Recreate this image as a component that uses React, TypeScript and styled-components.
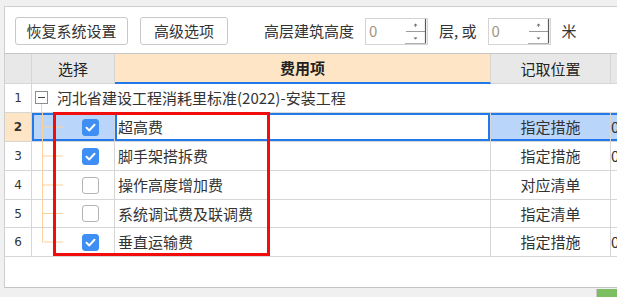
import React from 'react';
import styled, { createGlobalStyle, css } from 'styled-components';

const GlobalStyle = createGlobalStyle`
    html, body {
        margin: 0;
        padding: 0;
        background: #f0f0f0;
        overflow: hidden;
    }
    body {
        font-family: "Noto Sans CJK SC", "Noto Sans", sans-serif;
        color: #333333;
    }
`;

const Page = styled.div`
    width: 617px;
    height: 297px;
    padding: 6px 0 0 4px;
    box-sizing: border-box;
    display: flex;
    flex-direction: column;
`;

const Panel = styled.div`
    position: relative;
    height: 282px;
    width: 620px;
    box-sizing: border-box;
    background: #ffffff;
    border-top: 1px solid #cfcfcf;
    border-left: 1px solid #cfcfcf;
    border-bottom: 1px solid #c4c4c4;
    display: flex;
    flex-direction: column;
    overflow: hidden;
`;

const Toolbar = styled.div`
    height: 47px;
    box-sizing: border-box;
    border-bottom: 1px solid #c6c6c6;
    display: flex;
    align-items: center;
    padding: 2px 0 0 10px;
    gap: 12px;
    font-size: 15px;
`;

const ToolButton = styled.button<{ $w: number }>`
    width: ${(p) => p.$w}px;
    height: 28px;
    padding: 0;
    background: #ffffff;
    border: 1px solid #c8c8c8;
    border-radius: 3px;
    font-family: inherit;
    font-size: 15px;
    color: #333333;
    line-height: 26px;
`;

const HeightGroup = styled.div`
    display: flex;
    align-items: center;
    gap: 11px;
    margin-left: 24px;
`;

const Label = styled.span`
    line-height: 20px;
    white-space: nowrap;
`;

const SpinBox = styled.div`
    width: 63px;
    height: 27px;
    box-sizing: border-box;
    border: 1px solid #d4d4d4;
    display: flex;
    align-items: center;
    justify-content: space-between;
    padding: 0 0 0 3px;
`;

const SpinValue = styled.span`
    font-size: 15px;
    color: #a4947f;
    line-height: 20px;
`;

const SpinArrows = () => (
    <svg width="22" height="25" viewBox="0 0 22 25">
        <line x1="1" y1="12.5" x2="20" y2="12.5" stroke="#9a9a9a" strokeWidth="1" />
        <line x1="20.5" y1="0" x2="20.5" y2="25" stroke="#5a5a5a" strokeWidth="1.2" />
        <line x1="0" y1="24.5" x2="21" y2="24.5" stroke="#b0b0b0" strokeWidth="1" />
        <path d="M8.5 6.5 L10.5 4.5 L12.5 6.5 Z" fill="#666" />
        <line x1="10.5" y1="6" x2="10.5" y2="8" stroke="#888" strokeWidth="1" />
        <path d="M8.5 18.5 L10.5 20.5 L12.5 18.5 Z" fill="#666" />
    </svg>
);

const Grid = styled.div`
    display: grid;
    grid-template-columns: 27px 83px 376px 120px 1fr;
    grid-template-rows: 30px 29px 29px 29px 29px 28px 29px 29px;
    font-size: 15px;
`;

const gridLine = '#d6d6d6';
const selBlue = '#2179ea';

const HeadCell = styled.div<{ $accent?: boolean }>`
    box-sizing: border-box;
    border-right: 1px solid ${gridLine};
    display: flex;
    align-items: center;
    justify-content: center;
    line-height: 20px;
    background: ${(p) => (p.$accent ? '#fde5c6' : '#e8e8e8')};
    font-weight: ${(p) => (p.$accent ? 700 : 400)};
    border-bottom: ${(p) => (p.$accent ? `2px solid ${selBlue}` : `1px solid ${gridLine}`)};
    color: #222;
`;

const RowNo = styled.div<{ $active?: boolean }>`
    box-sizing: border-box;
    border-right: 1px solid ${gridLine};
    border-bottom: 1px solid ${gridLine};
    display: flex;
    align-items: center;
    justify-content: center;
    font-family: "DejaVu Sans", sans-serif;
    font-size: 12px;
    background: ${(p) => (p.$active ? '#fde5c6' : '#ffffff')};
    font-weight: ${(p) => (p.$active ? 700 : 400)};
    color: #333;
`;

const Cell = styled.div<{ $sel?: boolean; $edge?: 'left' | 'all'; $align?: 'left' | 'center' }>`
    box-sizing: border-box;
    border-right: 1px solid ${gridLine};
    border-bottom: 1px solid ${gridLine};
    display: flex;
    align-items: center;
    justify-content: ${(p) => (p.$align === 'center' ? 'center' : 'flex-start')};
    line-height: 20px;
    white-space: nowrap;
    overflow: hidden;
    background: #ffffff;
    ${(p) =>
        p.$sel &&
        css`
            background: #b9d6fa;
            box-shadow: inset 0 2px 0 ${selBlue}, inset 0 -2px 0 ${selBlue};
        `}
    ${(p) =>
        p.$sel &&
        p.$edge === 'left' &&
        css`
            box-shadow: inset 2px 0 0 ${selBlue}, inset 0 2px 0 ${selBlue}, inset 0 -2px 0 ${selBlue};
        `}
    ${(p) =>
        p.$sel &&
        p.$edge === 'all' &&
        css`
            background: #ffffff;
            box-shadow: inset 0 0 0 2px ${selBlue};
        `}
`;

const SelectCell = styled(Cell)`
    align-items: stretch;
`;

const FeeCell = styled(Cell)`
    padding-left: 3px;
`;

const GroupCell = styled.div`
    grid-column: 2 / -1;
    box-sizing: border-box;
    border-bottom: 1px solid ${gridLine};
    display: flex;
    align-items: stretch;
    padding-left: 3px;
    gap: 8px;
    line-height: 20px;
`;

const GroupText = styled.span`
    align-self: center;
    white-space: nowrap;
`;

const TreeGuide = styled.svg`
    width: 32px;
    height: 100%;
    flex: none;
`;

const CheckWrap = styled.div`
    display: flex;
    align-items: center;
    margin-left: 18px;
`;

const Box = styled.div<{ $on: boolean }>`
    width: 17px;
    height: 17px;
    box-sizing: border-box;
    border-radius: 3px;
    display: flex;
    align-items: center;
    justify-content: center;
    background: ${(p) => (p.$on ? '#3e8ef4' : '#ffffff')};
    border: 1px solid ${(p) => (p.$on ? '#3e8ef4' : '#b4b4b4')};
`;

const Filler = styled.div`
    flex: 1;
`;

const Annotation = styled.div`
    position: absolute;
    left: 48px;
    top: 105px;
    width: 217px;
    height: 144px;
    box-sizing: border-box;
    border: 3px solid #f20d0d;
    pointer-events: none;
`;

const StatusStrip = styled.div`
    flex: 1;
    display: flex;
    justify-content: flex-end;
    align-items: flex-end;
`;

const GreenTab = styled.div`
    width: 20px;
    height: 8px;
    background: #7cbf62;
    border-left: 1px solid #c9c9c9;
`;

const Checkbox: React.FC<{ on: boolean }> = ({ on }) => (
    <CheckWrap>
        <Box $on={on}>
            {on && (
                <svg width="13" height="13" viewBox="0 0 13 13">
                    <path d="M2.5 6.8 L5.3 9.4 L10.5 3.8" fill="none" stroke="#ffffff" strokeWidth="2" strokeLinecap="round" strokeLinejoin="round" />
                </svg>
            )}
        </Box>
    </CheckWrap>
);

interface FeeRow {
    no: number;
    name: string;
    checked: boolean;
    place: string;
    extra: string;
}

const rows: FeeRow[] = [
    { no: 2, name: '超高费', checked: true, place: '指定措施', extra: '0' },
    { no: 3, name: '脚手架搭拆费', checked: true, place: '指定措施', extra: '0' },
    { no: 4, name: '操作高度增加费', checked: false, place: '对应清单', extra: '' },
    { no: 5, name: '系统调试费及联调费', checked: false, place: '指定清单', extra: '' },
    { no: 6, name: '垂直运输费', checked: true, place: '指定措施', extra: '0' },
];

const treeColor = '#fcd29c';

const App: React.FC = () => {
    const activeNo = 2;

    return (
        <Page>
            <GlobalStyle />
            <Panel>
                <Toolbar>
                    <ToolButton $w={113}>恢复系统设置</ToolButton>
                    <ToolButton $w={88}>高级选项</ToolButton>
                    <HeightGroup>
                        <Label>高层建筑高度</Label>
                        <SpinBox>
                            <SpinValue>0</SpinValue>
                            <SpinArrows />
                        </SpinBox>
                        <Label>层, 或</Label>
                        <SpinBox>
                            <SpinValue>0</SpinValue>
                            <SpinArrows />
                        </SpinBox>
                        <Label>米</Label>
                    </HeightGroup>
                </Toolbar>

                <Grid>
                    <HeadCell />
                    <HeadCell>选择</HeadCell>
                    <HeadCell $accent>费用项</HeadCell>
                    <HeadCell>记取位置</HeadCell>
                    <HeadCell />

                    <RowNo>1</RowNo>
                    <GroupCell>
                        <svg width="14" height="100%" style={{ flex: 'none' }}>
                            <rect x="0.5" y="7.5" width="12" height="12" fill="#fff" stroke="#8c8c8c" />
                            <line x1="3" y1="13.5" x2="10" y2="13.5" stroke="#444" />
                            <line x1="6.5" y1="20" x2="6.5" y2="100%" stroke={treeColor} />
                        </svg>
                        <GroupText>河北省建设工程消耗里标准(2022)-安装工程</GroupText>
                    </GroupCell>

                    {rows.map((r, i) => {
                        const sel = r.no === activeNo;
                        const last = i === rows.length - 1;
                        return (
                            <React.Fragment key={r.no}>
                                <RowNo $active={sel}>{r.no}</RowNo>
                                <SelectCell $sel={sel} $edge="left">
                                    <TreeGuide>
                                        <line x1="10.5" y1="0" x2="10.5" y2={last ? '50%' : '100%'} stroke={treeColor} />
                                        <line x1="10.5" y1="50%" x2="31" y2="50%" stroke={treeColor} />
                                    </TreeGuide>
                                    <Checkbox on={r.checked} />
                                </SelectCell>
                                <FeeCell $sel={sel} $edge="all">{r.name}</FeeCell>
                                <Cell $sel={sel} $align="center">{r.place}</Cell>
                                <Cell $sel={sel}>{r.extra}</Cell>
                            </React.Fragment>
                        );
                    })}
                </Grid>
                <Filler />
                <Annotation />
            </Panel>
            <StatusStrip>
                <GreenTab />
            </StatusStrip>
        </Page>
    );
};

export default App;
